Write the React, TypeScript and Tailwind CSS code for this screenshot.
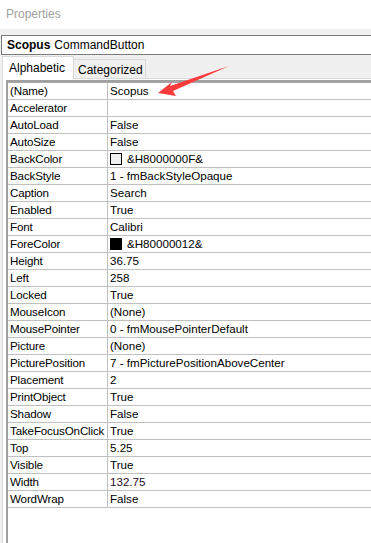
import React from "react";

const rows: [string, string, ("light" | "dark")?][] = [
  ["(Name)", "Scopus"],
  ["Accelerator", ""],
  ["AutoLoad", "False"],
  ["AutoSize", "False"],
  ["BackColor", "&H8000000F&", "light"],
  ["BackStyle", "1 - fmBackStyleOpaque"],
  ["Caption", "Search"],
  ["Enabled", "True"],
  ["Font", "Calibri"],
  ["ForeColor", "&H80000012&", "dark"],
  ["Height", "36.75"],
  ["Left", "258"],
  ["Locked", "True"],
  ["MouseIcon", "(None)"],
  ["MousePointer", "0 - fmMousePointerDefault"],
  ["Picture", "(None)"],
  ["PicturePosition", "7 - fmPicturePositionAboveCenter"],
  ["Placement", "2"],
  ["PrintObject", "True"],
  ["Shadow", "False"],
  ["TakeFocusOnClick", "True"],
  ["Top", "5.25"],
  ["Visible", "True"],
  ["Width", "132.75"],
  ["WordWrap", "False"],
];

export default function App() {
  return (
    <div className="relative w-[371px] h-[543px] overflow-hidden bg-white text-[12px] leading-none text-black font-['Liberation_Sans',Arial,sans-serif]">
      <div className="h-[29px] pl-[6px] pt-[8px] text-[#a0a0a0]">Properties</div>
      <div className="h-[514px] bg-[#f0f0f0] pt-[6px] flex flex-col">
        <div className="ml-[1px] h-[20px] border-y border-l border-[#7a7a7a] bg-white flex items-center pl-[5px]">
          <span className="font-bold">Scopus</span>
          <span className="ml-[4px]">CommandButton</span>
        </div>
        <div className="h-[23px] flex items-end pl-[2px]">
          <div className="relative z-10 h-[23px] w-[72px] bg-white border border-b-0 border-[#d9d9d9] pl-[6px] pt-[5px] mb-[-1px]">
            Alphabetic
          </div>
          <div className="h-[19px] w-[72px] bg-[#f0f0f0] border border-l-0 border-b-0 border-[#d9d9d9] pl-[4px] pt-[4px]">
            Categorized
          </div>
        </div>
        <div className="flex-1 ml-[2px] border-l border-t border-[#d9d9d9] bg-white pl-[3px] pt-[1px]">
          <div className="h-full border-l-2 border-t-2 border-[#a0a0a0] bg-white text-[11.6px]">
            <div className="border-t border-[#a8a8a8]">
              {rows.map(([k, v, sw], i) => (
                <div key={i} className="flex h-[17px] border-b border-[#c0c0c0]">
                  <div className="w-[100px] shrink-0 border-r border-[#c0c0c0] pl-[2px] flex items-center whitespace-nowrap overflow-hidden tracking-[-0.15px]">
                    {k}
                  </div>
                  <div className="flex-1 pl-[2px] flex items-center whitespace-nowrap">
                    {sw && (
                      <span
                        className={
                          "inline-block w-[12px] h-[12px] border border-black mr-[5px] " +
                          (sw === "light" ? "bg-[#f0f0f0]" : "bg-black")
                        }
                      />
                    )}
                    <span className={k === "Width" ? "text-[#2a0a2a]" : ""}>{v}</span>
                  </div>
                </div>
              ))}
            </div>
          </div>
        </div>
      </div>
      <svg className="absolute left-0 top-0 pointer-events-none" width="371" height="120" viewBox="0 0 371 120">
        <path d="M229 66 L170 86 L172 82 L158 93 L176 96 L173 91 Z" fill="#ff3b3b" />
      </svg>
    </div>
  );
}
